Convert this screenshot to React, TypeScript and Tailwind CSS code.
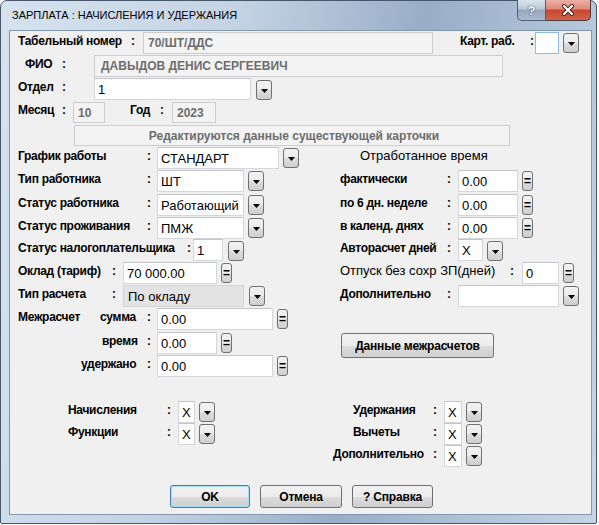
import React from 'react';

type Kind = 'white' | 'off' | 'gray' | 'focus';

const looks: Record<Kind, string> = {
  white: 'bg-white border-[#d3d6db] border-t-[#c2c5ca] text-black text-[13px] pl-[3px]',
  off: 'bg-[#f3f3f3] border-[#cdcdcd] text-[#6d6d6d] text-[12px] font-bold pl-[4px]',
  gray: 'bg-[#e3e3e3] border-[#d5d5d5] text-black text-[13px] pl-[4px]',
  focus: 'bg-white border-[#8cbbe6] pl-[3px]',
};

function Lbl({ className = '', children }: { className?: string; children?: React.ReactNode }) {
  return (
    <span className={`shrink-0 whitespace-nowrap text-[12px] font-bold tracking-[-0.3px] leading-[18px] text-black ${className}`}>
      {children}
    </span>
  );
}

function Field({
  className = '',
  kind = 'white',
  h = 'h-[22px]',
  children,
}: {
  className?: string;
  kind?: Kind;
  h?: string;
  children?: React.ReactNode;
}) {
  return (
    <div className={`shrink-0 ${h} border flex items-center whitespace-nowrap overflow-hidden leading-none ${looks[kind]} ${className}`}>
      {children}
    </div>
  );
}

const btnFace =
  'bg-[linear-gradient(#f2f2f2_0%,#ebebeb_50%,#dddddd_51%,#cfcfcf_100%)] border border-[#707070] rounded-[3px]';

function Drop({ className = '' }: { className?: string }) {
  return (
    <div className={`shrink-0 w-[16px] h-[20px] flex items-center justify-center ${btnFace} ${className}`}>
      <svg width="7" height="4" viewBox="0 0 7 4" className="mt-[1px]">
        <path d="M0 0h7L3.5 4z" fill="#000" />
      </svg>
    </div>
  );
}

function Eq({ className = '' }: { className?: string }) {
  return (
    <div className={`shrink-0 w-[11px] h-[20px] flex items-center justify-center text-[12px] font-bold leading-none text-black ${btnFace} ${className}`}>
      =
    </div>
  );
}

function Btn({ className = '', def = false, children }: { className?: string; def?: boolean; children: React.ReactNode }) {
  return (
    <div
      className={`shrink-0 flex items-center justify-center rounded-[3px] border text-[12px] font-bold tracking-[-0.2px] text-black bg-[linear-gradient(#f2f2f2_0%,#ebebeb_50%,#dddddd_51%,#cfcfcf_100%)] ${
        def ? 'border-[#3c7fb1] shadow-[inset_0_0_0_1px_#a6def7]' : 'border-[#707070]'
      } ${className}`}
    >
      {children}
    </div>
  );
}

export default function App() {
  return (
    <div className="w-[599px] h-[525px] bg-white font-['Liberation_Sans',Arial,sans-serif]">
      <div className="w-[597px] h-[524px] rounded-t-[7px] rounded-b-[2px] border border-[#46576b] bg-[linear-gradient(100deg,#d6e2ee_0%,#c4d3e4_35%,#98aec7_62%,#b3c6da_85%,#c6d5e4_100%)] flex flex-col">
        {/* title bar */}
        <div className="h-[29px] shrink-0 flex items-start">
          <span className="ml-[11px] mt-[7px] text-[11px] leading-[14px] text-black whitespace-nowrap">
            ЗАРПЛАТА : НАЧИСЛЕНИЯ И УДЕРЖАНИЯ
          </span>
          <div className="ml-auto mr-[5px] -mt-[1px] flex">
            <div className="w-[29px] h-[21px] rounded-bl-[5px] border border-t-0 border-[#4f6075] bg-[linear-gradient(#dbe3ec_0%,#b9c8d8_45%,#93a7be_50%,#a9bbcf_100%)] flex items-center justify-center text-[13px] font-bold text-white leading-none [text-shadow:0_0_1px_#2c3a4b,0_0_1px_#2c3a4b]">
              ?
            </div>
            <div className="w-[45px] h-[21px] rounded-br-[5px] border border-t-0 border-l-0 border-[#4f3a38] bg-[linear-gradient(#eab0a4_0%,#de8a79_45%,#c9472f_50%,#d0624c_100%)] flex items-center justify-center">
              <svg width="14" height="12" viewBox="0 0 14 12">
                <path d="M3 2 L11 10 M11 2 L3 10" stroke="#3b2320" strokeWidth="4" strokeLinecap="round" />
                <path d="M3 2 L11 10 M11 2 L3 10" stroke="#fff" strokeWidth="2.2" strokeLinecap="round" />
              </svg>
            </div>
          </div>
        </div>

        {/* client area */}
        <div className="ml-[8px] w-[583px] h-[485px] shrink-0 border border-[#8297ad] bg-[#f0f0f0] flex flex-col pt-[1px]">
          <div className="flex items-start h-[23px] shrink-0">
            <Lbl className="ml-[8px] w-[113px]">Табельный номер</Lbl>
            <Lbl className="w-[12px]">:</Lbl>
            <Field kind="off" className="w-[290px]">70/ШТ/ДДС</Field>
            <Lbl className="ml-[27px] w-[70px]">Карт. раб.</Lbl>
            <Lbl className="w-[5px]">:</Lbl>
            <Field kind="focus" className="w-[24px]" />
            <Drop className="ml-[4px] mt-[1px]" />
          </div>

          <div className="flex items-start h-[23px] shrink-0">
            <Lbl className="ml-[15px] w-[37px]">ФИО</Lbl>
            <Lbl className="w-[32px]">:</Lbl>
            <Field kind="off" className="w-[409px] !pl-[6px]">ДАВЫДОВ ДЕНИС СЕРГЕЕВИЧ</Field>
          </div>

          <div className="flex items-start h-[23px] shrink-0">
            <Lbl className="ml-[8px] w-[44px]">Отдел</Lbl>
            <Lbl className="w-[32px]">:</Lbl>
            <Field className="w-[157px]">1</Field>
            <Drop className="ml-[5px] mt-[2px]" />
          </div>

          <div className="flex items-start h-[24px] shrink-0">
            <Lbl className="ml-[8px] w-[44px]">Месяц</Lbl>
            <Lbl className="w-[11px]">:</Lbl>
            <Field kind="off" h="h-[21px]" className="w-[32px] mt-[1px]">10</Field>
            <Lbl className="ml-[25px] w-[30px]">Год</Lbl>
            <Lbl className="w-[12px]">:</Lbl>
            <Field kind="off" h="h-[21px]" className="w-[44px] mt-[1px]">2023</Field>
          </div>

          <div className="flex items-start h-[22px] shrink-0">
            <Field kind="off" h="h-[21px]" className="ml-[64px] w-[436px] justify-center">
              Редактируются данные существующей карточки
            </Field>
          </div>

          <div className="flex items-start h-[23px] shrink-0">
            <Lbl className="ml-[8px] w-[129px]">График работы</Lbl>
            <Lbl className="w-[10px]">:</Lbl>
            <Field className="w-[122px]">СТАНДАРТ</Field>
            <Drop className="ml-[4px] mt-[1px]" />
            <span className="ml-[61px] shrink-0 whitespace-nowrap text-[13px] leading-[17px] text-black">
              Отработанное время
            </span>
          </div>

          <div className="flex items-start h-[24px] shrink-0">
            <Lbl className="ml-[8px] w-[129px]">Тип работника</Lbl>
            <Lbl className="w-[10px]">:</Lbl>
            <Field className="w-[87px]">ШТ</Field>
            <Drop className="ml-[4px] mt-[1px]" />
            <Lbl className="ml-[76px] w-[107px]">фактически</Lbl>
            <Lbl className="w-[11px]">:</Lbl>
            <Field className="w-[60px]">0.00</Field>
            <Eq className="ml-[4px] mt-[1px]" />
          </div>

          <div className="flex items-start h-[23px] shrink-0">
            <Lbl className="ml-[8px] w-[129px]">Статус работника</Lbl>
            <Lbl className="w-[10px]">:</Lbl>
            <Field className="w-[87px]">Работающий</Field>
            <Drop className="ml-[4px] mt-[1px]" />
            <Lbl className="ml-[76px] w-[107px]">по 6 дн. неделе</Lbl>
            <Lbl className="w-[11px]">:</Lbl>
            <Field className="w-[60px]">0.00</Field>
            <Eq className="ml-[4px] mt-[1px]" />
          </div>

          <div className="flex items-start h-[22px] shrink-0">
            <Lbl className="ml-[8px] w-[129px]">Статус проживания</Lbl>
            <Lbl className="w-[10px]">:</Lbl>
            <Field className="w-[87px]">ПМЖ</Field>
            <Drop className="ml-[4px] mt-[1px]" />
            <Lbl className="ml-[76px] w-[107px]">в календ. днях</Lbl>
            <Lbl className="w-[11px]">:</Lbl>
            <Field className="w-[60px]">0.00</Field>
            <Eq className="ml-[4px] mt-[1px]" />
          </div>

          <div className="flex items-start h-[23px] shrink-0">
            <Lbl className="ml-[8px] w-[169px]">Статус налогоплательщика</Lbl>
            <Lbl className="w-[6px]">:</Lbl>
            <Field className="w-[30px]">1</Field>
            <Drop className="ml-[5px] mt-[2px]" />
            <Lbl className="ml-[96px] w-[107px]">Авторасчет дней</Lbl>
            <Lbl className="w-[11px]">:</Lbl>
            <Field className="w-[25px]">X</Field>
            <Drop className="ml-[4px] mt-[2px]" />
          </div>

          <div className="flex items-start h-[23px] shrink-0">
            <Lbl className="ml-[8px] w-[94px]">Оклад (тариф)</Lbl>
            <Lbl className="w-[11px]">:</Lbl>
            <Field className="w-[94px]">70 000.00</Field>
            <Eq className="ml-[4px] mt-[1px]" />
            <Lbl className="ml-[108px] w-[170px] !font-normal !tracking-normal text-[13px]">Отпуск без сохр ЗП(дней)</Lbl>
            <Lbl className="w-[12px]">:</Lbl>
            <Field className="w-[37px]">0</Field>
            <Eq className="ml-[4px] mt-[1px]" />
          </div>

          <div className="flex items-start h-[23px] shrink-0">
            <Lbl className="ml-[8px] w-[94px]">Тип расчета</Lbl>
            <Lbl className="w-[11px]">:</Lbl>
            <Field kind="gray" className="w-[121px]">По окладу</Field>
            <Drop className="ml-[5px] mt-[1px]" />
            <Lbl className="ml-[75px] w-[107px]">Дополнительно</Lbl>
            <Lbl className="w-[11px]">:</Lbl>
            <Field className="w-[101px]" />
            <Drop className="ml-[4px] mt-[1px]" />
          </div>

          <div className="flex items-start h-[24px] shrink-0">
            <Lbl className="ml-[8px] w-[82px]">Межрасчет</Lbl>
            <Lbl className="w-[47px]">сумма</Lbl>
            <Lbl className="w-[10px]">:</Lbl>
            <Field className="w-[116px]">0.00</Field>
            <Eq className="ml-[4px] mt-[1px]" />
          </div>

          <div className="flex items-start h-[23px] shrink-0">
            <Lbl className="ml-[92px] w-[45px]">время</Lbl>
            <Lbl className="w-[10px]">:</Lbl>
            <Field className="w-[60px]">0.00</Field>
            <Eq className="ml-[4px] mt-[1px]" />
            <Btn className="ml-[109px] mt-[1px] w-[153px] h-[25px]">Данные межрасчетов</Btn>
          </div>

          <div className="flex items-start h-[46px] shrink-0">
            <Lbl className="ml-[71px] w-[66px]">удержано</Lbl>
            <Lbl className="w-[10px]">:</Lbl>
            <Field className="w-[116px]">0.00</Field>
            <Eq className="ml-[4px] mt-[1px]" />
          </div>

          <div className="flex items-start h-[22px] shrink-0">
            <Lbl className="ml-[58px] w-[99px]">Начисления</Lbl>
            <Lbl className="w-[11px]">:</Lbl>
            <Field className="w-[17px]">X</Field>
            <Drop className="ml-[4px] mt-[1px]" />
            <Lbl className="ml-[138px] w-[80px]">Удержания</Lbl>
            <Lbl className="w-[11px]">:</Lbl>
            <Field className="w-[18px]">X</Field>
            <Drop className="ml-[4px] mt-[1px]" />
          </div>

          <div className="flex items-start h-[22px] shrink-0">
            <Lbl className="ml-[58px] w-[99px]">Функции</Lbl>
            <Lbl className="w-[11px]">:</Lbl>
            <Field className="w-[17px]">X</Field>
            <Drop className="ml-[4px] mt-[1px]" />
            <Lbl className="ml-[138px] w-[80px]">Вычеты</Lbl>
            <Lbl className="w-[11px]">:</Lbl>
            <Field className="w-[18px]">X</Field>
            <Drop className="ml-[4px] mt-[1px]" />
          </div>

          <div className="flex items-start h-[40px] shrink-0">
            <Lbl className="ml-[323px] w-[100px]">Дополнительно</Lbl>
            <Lbl className="w-[11px]">:</Lbl>
            <Field className="w-[18px]">X</Field>
            <Drop className="ml-[4px] mt-[1px]" />
          </div>

          <div className="flex items-start h-[23px] shrink-0">
            <Btn def className="ml-[160px] w-[80px] h-[23px]">OK</Btn>
            <Btn className="ml-[10px] w-[82px] h-[23px]">Отмена</Btn>
            <Btn className="ml-[10px] w-[81px] h-[23px]">? Справка</Btn>
          </div>
        </div>
      </div>
    </div>
  );
}
